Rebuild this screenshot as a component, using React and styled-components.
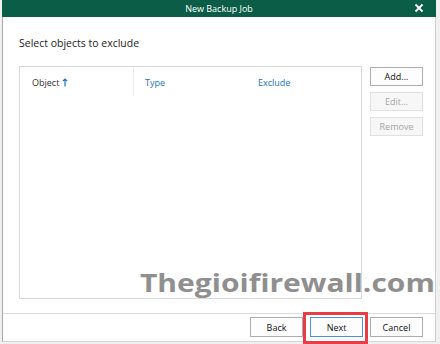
import React from "react";
import styled, { createGlobalStyle } from "styled-components";

const Global = createGlobalStyle`
  html, body { margin: 0; padding: 0; background: #ffffff; }
  body { font-family: "Open Sans", "Noto Sans", sans-serif; width: 440px; height: 344px; overflow: hidden; }
`;

const Page = styled.div`
  position: relative;
  width: 440px;
  height: 344px;
  background: #f0f0f0;
  display: flex;
`;

const Window = styled.div`
  margin-left: 2px;
  width: 434px;
  height: 342px;
  background: #ffffff;
  border-left: 1px solid #a8a8a8;
  border-right: 1px solid #d0d0d0;
  border-bottom: 1px solid #d6d6d6;
  display: flex;
  flex-direction: column;
  box-sizing: border-box;
`;

const TitleBar = styled.div`
  position: relative;
  height: 17px;
  background: #0b5d47;
  color: #ffffff;
  font-size: 9px;
  display: flex;
  align-items: center;
  justify-content: center;
  margin-left: -1px;
  margin-right: -1px;
`;

const Close = styled.div`
  position: absolute;
  right: 12px;
  top: 3px;
  width: 10px;
  height: 10px;
`;

const Body = styled.div`
  flex: 1;
  display: flex;
  flex-direction: column;
  padding: 0 0 0 16px;
`;

const Heading = styled.div`
  font-size: 10.5px;
  color: #222;
  margin-top: 18px;
  height: 16px;
  line-height: 16px;
`;

const Main = styled.div`
  display: flex;
  margin-top: 15px;
  gap: 8px;
`;

const TableBox = styled.div`
  width: 343px;
  height: 233px;
  border: 1px solid #dadada;
  box-sizing: border-box;
`;

const HeaderRow = styled.div`
  display: grid;
  grid-template-columns: 114px 113px 1fr;
  height: 28px;
  margin-top: 1px;
`;

const HeaderCell = styled.div`
  display: flex;
  align-items: center;
  padding-left: ${p => p.$pad}px;
  font-size: 9px;
  color: ${p => (p.$link ? "#1a73c0" : "#333")};
  border-right: ${p => (p.$sep ? "1px solid #ececec" : "none")};
  gap: 3px;
`;

const Side = styled.div`
  display: flex;
  flex-direction: column;
  gap: 6px;
  padding-top: 1px;
`;

const Btn = styled.button`
  width: 53px;
  height: 19px;
  box-sizing: border-box;
  border: 1px solid ${p => (p.$disabled ? "#e0e0e0" : p.$primary ? "#4a90d9" : "#adadad")};
  background: ${p => (p.$disabled ? "#f7f7f7" : "#fdfdfd")};
  color: ${p => (p.$disabled ? "#a6a6a6" : "#111")};
  font-family: "Open Sans", "Noto Sans", sans-serif;
  font-size: 9px;
  padding: 0;
  display: flex;
  align-items: center;
  justify-content: center;
`;

const Footer = styled.div`
  position: relative;
  box-sizing: border-box;
  border-top: 1px solid #dcdcdc;
  height: 28px;
  display: flex;
  justify-content: flex-end;
  align-items: flex-start;
  padding: 3px 12px 0 0;
  gap: 7px;
`;

const FooterBtn = styled(Btn)`
  height: 20px;
  width: 53px;
`;

const Highlight = styled.div`
  position: absolute;
  left: 303px;
  top: 312px;
  width: 65px;
  height: 32px;
  box-sizing: border-box;
  border: 3px solid #e83d45;
`;

const Watermark = styled.div`
  position: absolute;
  left: 140px;
  top: 265px;
  font-family: "Open Sans", "Noto Sans", sans-serif;
  font-weight: 700;
  font-size: 25px;
  color: #8f8f8f;
  line-height: 34px;
  transform: scaleX(1.2);
  transform-origin: left center;
  white-space: nowrap;
`;

export default function App() {
  return (
    <>
      <Global />
      <Page>
        <Window>
          <TitleBar>
            New Backup Job
            <Close>
              <svg width="10" height="10" viewBox="0 0 10 10">
                <path d="M1.5 1.5 L8.5 8.5 M8.5 1.5 L1.5 8.5" stroke="#fff" strokeWidth="1.8" />
              </svg>
            </Close>
          </TitleBar>
          <Body>
            <Heading>Select objects to exclude</Heading>
            <Main>
              <TableBox>
                <HeaderRow>
                  <HeaderCell $pad={12} $sep>
                    Object
                    <svg width="6" height="9" viewBox="0 0 6 9">
                      <path d="M3 8.5 V1 M0.8 3.2 L3 1 L5.2 3.2" stroke="#1a73c0" strokeWidth="1.2" fill="none" />
                    </svg>
                  </HeaderCell>
                  <HeaderCell $pad={11} $link>Type</HeaderCell>
                  <HeaderCell $pad={11} $link>Exclude</HeaderCell>
                </HeaderRow>
              </TableBox>
              <Side>
                <Btn>Add...</Btn>
                <Btn $disabled>Edit...</Btn>
                <Btn $disabled>Remove</Btn>
              </Side>
            </Main>
          </Body>
          <Footer>
            <FooterBtn>Back</FooterBtn>
            <FooterBtn $primary>Next</FooterBtn>
            <FooterBtn>Cancel</FooterBtn>
          </Footer>
        </Window>
        <Watermark>Thegioifirewall.com</Watermark>
        <Highlight />
      </Page>
    </>
  );
}
